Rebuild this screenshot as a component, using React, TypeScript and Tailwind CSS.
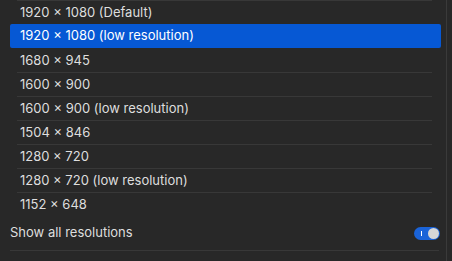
import React from "react";

const items = [
  "1920 × 1080 (Default)",
  "1920 × 1080 (low resolution)",
  "1680 × 945",
  "1600 × 900",
  "1600 × 900 (low resolution)",
  "1504 × 846",
  "1280 × 720",
  "1280 × 720 (low resolution)",
  "1152 × 648",
];

export default function App() {
  return (
    <div
      className="w-[452px] h-[261px] bg-[#282828] flex overflow-hidden text-[13px] text-[#dedede]"
      style={{ fontFamily: "Inter, 'Liberation Sans', sans-serif" }}
    >
      <div className="w-[447px] h-full border-r border-[#3a3a3a] pl-[10px] pr-[5px] flex flex-col">
        {items.map((t, i) => {
          const sel = i === 1;
          return (
            <div key={t} className="h-[24px] flex flex-col">
              {sel ? (
                <div className="h-[24px] bg-[#0658d4] rounded-[2px] flex items-center pl-[10px] text-white">
                  {t}
                </div>
              ) : (
                <>
                  <div
                    className={
                      i === 2
                        ? "h-px"
                        : "h-px ml-[7px] mr-[9px] bg-[#383838]"
                    }
                  />
                  <div className="h-[23px] flex items-center pl-[10px]">{t}</div>
                </>
              )}
            </div>
          );
        })}
        <div className="h-[34px] flex items-center justify-between">
          <span>Show all resolutions</span>
          <div className="w-[26px] h-[13px] rounded-full bg-[#1a63d8] flex items-center justify-end pr-px relative mr-px">
            <div className="absolute left-[7px] top-[4px] w-px h-[5px] bg-white" />
            <div className="w-[11px] h-[11px] rounded-full bg-[#d6d6d6]" />
          </div>
        </div>
        <div className="h-px bg-[#383838] mr-[2px]" />
      </div>
    </div>
  );
}
